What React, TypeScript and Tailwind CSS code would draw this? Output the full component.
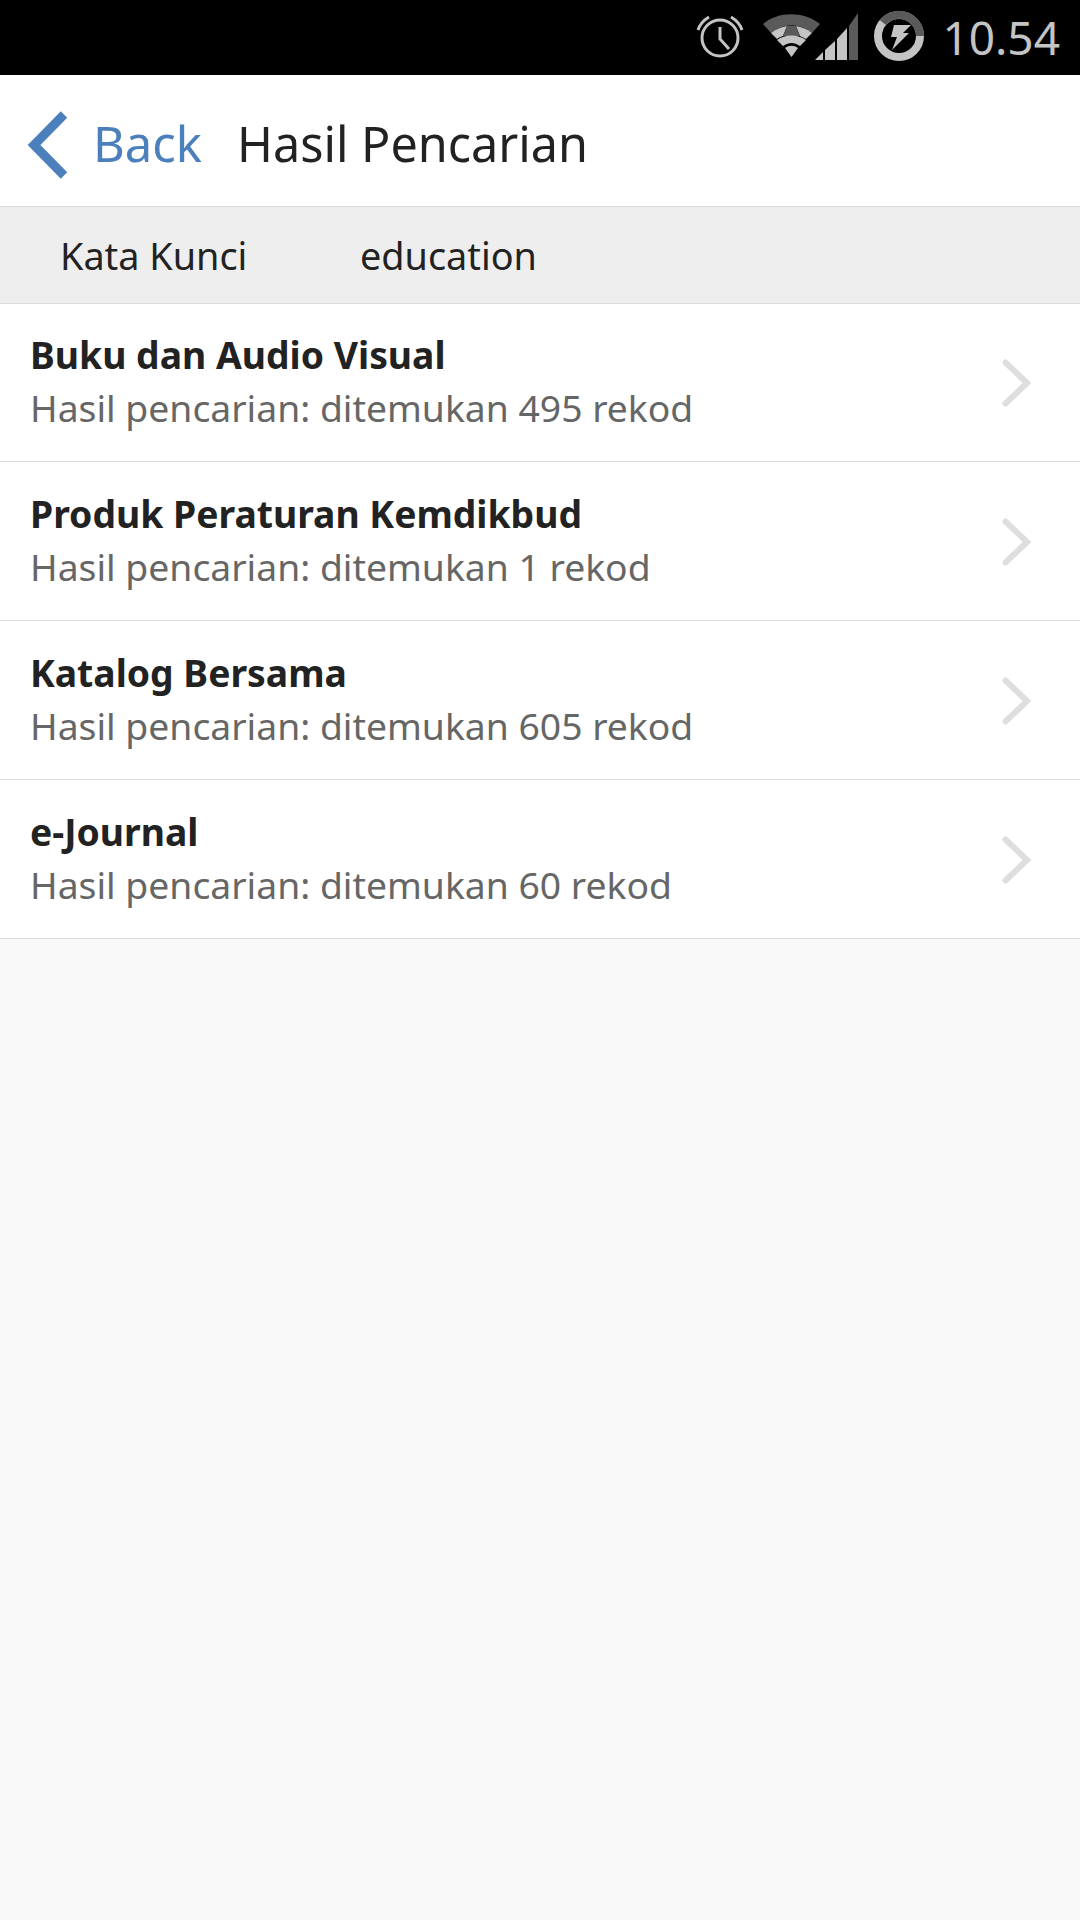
const rows = [
  ["Buku dan Audio Visual", "Hasil pencarian: ditemukan 495 rekod"],
  ["Produk Peraturan Kemdikbud", "Hasil pencarian: ditemukan 1 rekod"],
  ["Katalog Bersama", "Hasil pencarian: ditemukan 605 rekod"],
  ["e-Journal", "Hasil pencarian: ditemukan 60 rekod"],
];

function StatusIcons() {
  return (
    <svg width="310" height="75" viewBox="0 0 310 75" className="shrink-0">
      <g fill="none" stroke="#c4c4c4" strokeWidth="3">
        <circle cx="100" cy="38" r="18" />
        <path d="M100 27V39L109 49" />
        <path d="M78 30C80 24 84 20 89 17M122 30C120 24 116 20 111 17" strokeWidth="3" />
      </g>
      <path d="M143 24C158 11 184 11 200 24L192 33C180 23 163 23 151 33Z" fill="#5a5a5a" />
      <path d="M151 33C156 29 161 27 167 26L163 36C160 37 158 38 157 39Z" fill="#c4c4c4" />
      <path d="M176 26C182 27 187 29 192 33L186 39C184 38 182 37 180 36Z" fill="#c4c4c4" />
      <path d="M167 26H176L180 36H163Z" fill="#5a5a5a" />
      <path d="M157 40C165 34 178 34 186 40L180 46C174 42 169 42 163 46Z" fill="#c4c4c4" />
      <path d="M165 48C169 45 174 45 178 48L171.500 57Z" fill="#c4c4c4" />
      <path d="M195 60L203 52V60Z" fill="#c4c4c4" />
      <path d="M205 50L215 41V60H205Z" fill="#c4c4c4" />
      <path d="M217 39L227 28V60H217Z" fill="#c4c4c4" />
      <path d="M229 26L238 13V60H229Z" fill="#5a5a5a" />
      <circle cx="279" cy="36" r="21" fill="none" stroke="#c4c4c4" strokeWidth="8" />
      <path d="M262.800 22.500A21 21 0 0 1 300 36" fill="none" stroke="#5a5a5a" strokeWidth="8" />
      <path d="M274 25H291L283 33H289L272 50L277 37H271Z" fill="#c4c4c4" />
    </svg>
  );
}

function Row({ title, sub, first }: { title: string; sub: string; first: boolean }) {
  return (
    <div className={`flex items-center justify-between border-b border-[#dddddd] bg-white pl-[30px] pr-[48px] ${first ? "h-[158px] pb-[1px]" : "h-[159px] pt-[1px]"}`}>
      <div className="-mt-[2px] flex flex-col">
        <div className="text-[37.3px] font-bold leading-[53px] text-[#222222]">{title}</div>
        <div className="text-[37.3px] leading-[54px] text-[#666666]">{sub}</div>
      </div>
      <svg width="30" height="48" viewBox="0 0 30 48" className={`shrink-0 ${first ? "mt-[2px]" : ""}`} fill="none">
        <path d="M3.500 3.500L25 24L3.500 44.500" stroke="#dedede" strokeWidth="6" strokeLinecap="round" strokeLinejoin="miter" />
      </svg>
    </div>
  );
}

export default function App() {
  return (
    <div className="flex h-[1920px] w-[1080px] flex-col overflow-hidden bg-[#f9f9f9] font-['Noto_Sans','Open_Sans',sans-serif]">
      <div className="flex h-[75px] shrink-0 items-center justify-end bg-black pr-[20px]">
        <StatusIcons />
        <span className="ml-[12px] text-[46px] leading-[75px] text-[#c4c4c4]">10.54</span>
      </div>
      <div className="flex h-[132px] shrink-0 items-center border-b border-[#dadada] bg-white pl-[27px]">
        <svg width="42" height="68" viewBox="0 0 42 68" className="mt-[9px] shrink-0" fill="none">
          <path d="M37 3.500L7 34L37 64.500" stroke="#4b80bd" strokeWidth="9" />
        </svg>
        <span className="ml-[24px] mt-[5px] text-[49px] leading-none text-[#4b80bd]">Back</span>
        <span className="ml-[35px] mt-[5px] text-[48.500px] leading-none text-[#222222]">Hasil Pencarian</span>
      </div>
      <div className="flex h-[97px] shrink-0 items-center border-b border-[#dddddd] bg-[#eeeeee] pl-[60px] pt-[2px] text-[37.800px] text-[#222222]">
        <span className="w-[300px]">Kata Kunci</span>
        <span>education</span>
      </div>
      {rows.map(([t, s], i) => (
        <Row key={t} title={t} sub={s} first={i === 0} />
      ))}
    </div>
  );
}
